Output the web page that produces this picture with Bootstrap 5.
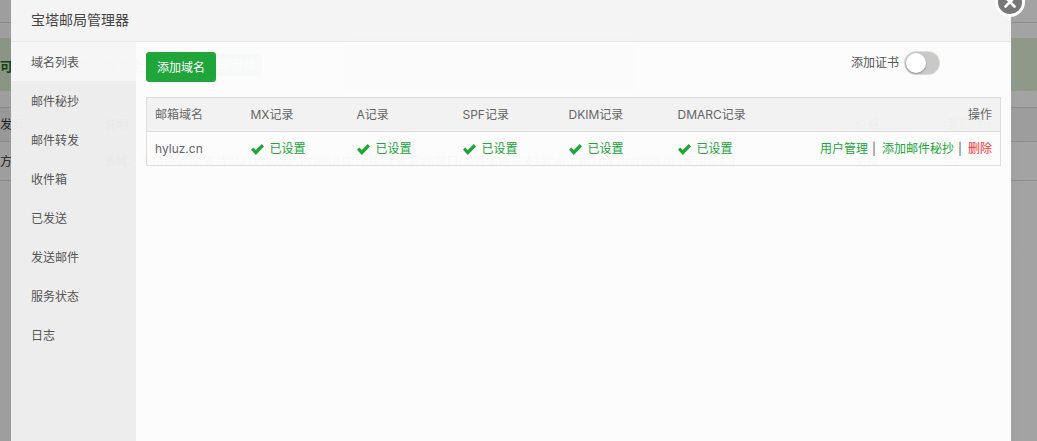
<!DOCTYPE html>
<html lang="zh-CN">
<head>
<meta charset="utf-8">
<title>宝塔邮局管理器</title>
<link rel="stylesheet" href="https://cdn.jsdelivr.net/npm/bootstrap@5.3.0/dist/css/bootstrap.min.css">
<style>
html,body{height:441px;overflow:hidden}
body{font-family:Inter,"Noto Sans CJK SC",sans-serif;font-size:12px;color:#666;background:#fff;position:relative}
.bg-page{height:441px;color:#333;overflow:hidden}
.bg-top{height:23px;border-bottom:1px solid #ddd}
.bg-notice{margin-top:15px;height:53px;background:#dff0d8;color:#1c6b2a;font-size:13px;font-weight:600;line-height:56px;white-space:nowrap}
.bg-notice-text{width:202px;flex:none}
.bg-upgrade{background:#20a53a;color:#fff;border-radius:3px;height:22px;line-height:22px;width:60px;text-align:center;margin-top:16px;font-weight:400;font-size:12px}
.bg-row{border-bottom:1px solid #ddd;white-space:nowrap;overflow:hidden;font-size:12px;align-items:center}
.bg-row.first{margin-top:16px;height:35px;border-top:1px solid #ddd;background:#f6f6f6}
.bg-row.second{height:39px;padding-top:2px}
.bg-c1{width:104px;flex:none;padding-left:0}
.bg-c1 span{margin-left:-12px}
.bg-c2{width:751px;flex:none}
.bg-c3{width:92px;flex:none}
.veil{position:absolute;inset:0;background:linear-gradient(90deg,rgba(0,0,0,.38),rgba(0,0,0,.42) 50%,rgba(0,0,0,.36))}
.mail-win{position:absolute;left:11px;top:-30px;width:1000px;height:471px;background:rgba(255,255,255,.97);color:#666;display:flex;flex-direction:column}
.win-title{height:72px;flex:none;padding:29px 20px 0;background:rgba(0,0,0,.03);border-bottom:1px solid #e8e8e8;font-size:14px;line-height:42px;color:#444}
.win-close{position:absolute;left:984px;top:17px;width:30px;height:30px;border-radius:50%;background:#777;border:3px solid #fff;padding:0;z-index:3}
.win-close svg{display:block;margin:6px}
.win-body{flex:1;min-height:0}
.side-menu{width:125px;flex:none;background:rgba(0,0,0,.06);padding-top:0}
.side-item{display:block;height:39px;line-height:41px;padding-left:20px;color:#555;text-decoration:none}
.side-item.on{background:rgba(255,255,255,.5);color:#555}
.main-pane{padding:10px 10px 0;min-width:0;flex:1}
.btn-add{background:#20a53a;border:1px solid #20a53a;color:#fff;font-size:12px;border-radius:3px;padding:0 8px;height:30px;line-height:30px;width:70px;white-space:nowrap}
.cert-label{color:#555;margin-right:6px;line-height:22px}
.cert-switch{display:block;width:34px;height:22px;border-radius:11px;background:#c9c9c8;box-shadow:0 0 0 1px #ddd;position:relative}
.cert-knob{position:absolute;left:1px;top:1px;width:20px;height:20px;border-radius:50%;background:#fff;box-shadow:0 1px 2px rgba(0,0,0,.3)}
.tool-row{height:45px;padding-right:62px}
.mail-table{width:855px;table-layout:fixed;font-size:12px;color:#666;margin:0;border:1px solid #ddd;--bs-table-bg:transparent;background:transparent}
.mail-table th,.mail-table td{padding:0 8px;height:34px;line-height:33px;border:0;white-space:nowrap;font-weight:400;color:#666;vertical-align:middle}
.mail-table thead th{background:rgba(0,0,0,.04);border-bottom:1px solid #ddd;color:#666}
.mail-table tbody td{background:transparent}
.mail-table td.state{color:#20a53a}
.state svg{vertical-align:-2px;margin-right:6px}
.op-link{color:#20a53a;text-decoration:none}
.op-del{color:#f33;text-decoration:none}
.op-sep{color:#666;margin:0 6px 0 4px}
</style>
</head>
<body>
<div class="bg-page">
  <div class="bg-top"></div>
  <div class="bg-notice d-flex"><span class="bg-notice-text">可以免费使用专业版及企业版</span><span class="bg-upgrade">立即升级</span></div>
  <div class="bg-row first d-flex"><div class="bg-c1"><span>开发商</span></div><div class="bg-c2">说明</div><div class="bg-c3">价格</div><div>到期时间</div></div>
  <div class="bg-row second d-flex"><div class="bg-c1"><span>官方</span></div><div class="bg-c2">多域、多用户邮局,支持SMTP/IMAP/POP3/HTTP接口,需要25端口(插件暂时只支持CentOS7和CentOS8.0) [使用帮助]</div><div class="bg-c3">免费</div><div>--</div></div>
</div>
<div class="veil"></div>
<div class="mail-win">
  <button type="button" class="win-close" aria-label="关闭"><svg width="12" height="12" viewBox="0 0 12 12"><path d="M1.5 1.5 10.5 10.5M10.5 1.5 1.5 10.5" stroke="#fff" stroke-width="2.6" stroke-linecap="round"/></svg></button>
  <div class="win-title">宝塔邮局管理器</div>
  <div class="win-body d-flex">
    <nav class="side-menu">
      <a class="side-item on" href="#">域名列表</a>
      <a class="side-item" href="#">邮件秘抄</a>
      <a class="side-item" href="#">邮件转发</a>
      <a class="side-item" href="#">收件箱</a>
      <a class="side-item" href="#">已发送</a>
      <a class="side-item" href="#">发送邮件</a>
      <a class="side-item" href="#">服务状态</a>
      <a class="side-item" href="#">日志</a>
    </nav>
    <div class="main-pane">
      <div class="tool-row d-flex justify-content-between align-items-start">
        <button type="button" class="btn btn-add">添加域名</button>
        <div class="d-flex align-items-center">
          <span class="cert-label">添加证书</span>
          <span class="cert-switch"><span class="cert-knob"></span></span>
        </div>
      </div>
      <table class="table mail-table">
        <colgroup><col style="width:96px"><col style="width:106px"><col style="width:106px"><col style="width:106px"><col style="width:109px"><col style="width:125px"><col></colgroup>
        <thead>
          <tr><th>邮箱域名</th><th>MX记录</th><th>A记录</th><th>SPF记录</th><th>DKIM记录</th><th>DMARC记录</th><th class="text-end">操作</th></tr>
        </thead>
        <tbody>
          <tr>
            <td>hyluz.cn</td>
            <td class="state"><svg width="13" height="11" viewBox="0 0 13 11"><path d="M0 5.8 2.2 3.4 4.8 6 10.8 0 13 2.4 4.8 11Z" fill="#20a53a"/></svg>已设置</td>
            <td class="state"><svg width="13" height="11" viewBox="0 0 13 11"><path d="M0 5.8 2.2 3.4 4.8 6 10.8 0 13 2.4 4.8 11Z" fill="#20a53a"/></svg>已设置</td>
            <td class="state"><svg width="13" height="11" viewBox="0 0 13 11"><path d="M0 5.8 2.2 3.4 4.8 6 10.8 0 13 2.4 4.8 11Z" fill="#20a53a"/></svg>已设置</td>
            <td class="state"><svg width="13" height="11" viewBox="0 0 13 11"><path d="M0 5.8 2.2 3.4 4.8 6 10.8 0 13 2.4 4.8 11Z" fill="#20a53a"/></svg>已设置</td>
            <td class="state"><svg width="13" height="11" viewBox="0 0 13 11"><path d="M0 5.8 2.2 3.4 4.8 6 10.8 0 13 2.4 4.8 11Z" fill="#20a53a"/></svg>已设置</td>
            <td class="text-end"><a class="op-link" href="#">用户管理</a><span class="op-sep">|</span><a class="op-link" href="#">添加邮件秘抄</a><span class="op-sep">|</span><a class="op-del" href="#">删除</a></td>
          </tr>
        </tbody>
      </table>
    </div>
  </div>
</div>
<script src="https://cdn.jsdelivr.net/npm/bootstrap@5.3.0/dist/js/bootstrap.bundle.min.js"></script>
</body>
</html>
